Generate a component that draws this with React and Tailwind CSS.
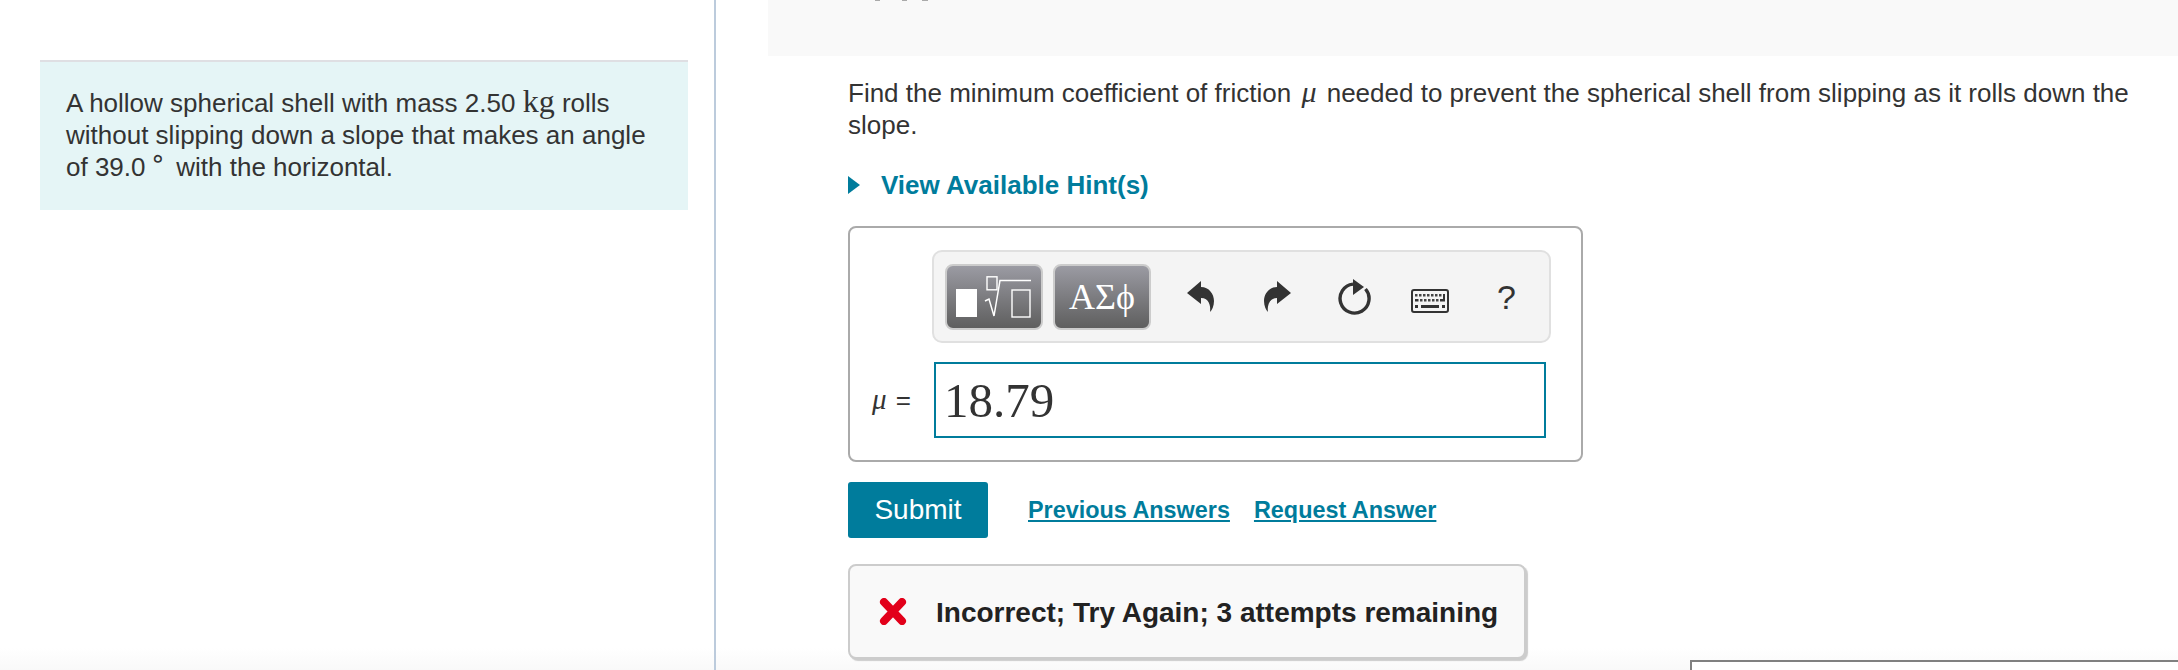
const teal = 'text-[#007c9c]';

function UndoIcon({ flip }) {
  return (
    <svg width="27" height="31" viewBox="0 0 27 31" className={flip ? '-scale-x-100' : ''}>
      <path d="M0 12 L14 0 V6 C22 6 27 13 27 20 C27 25 25 29 23 31 C24 25 22 17 14 17 V23 Z" fill="#333" />
    </svg>
  );
}

function RefreshIcon() {
  return (
    <svg width="33" height="36" viewBox="0 0 33 36">
      <path d="M15 5.1 A14.5 14.5 0 1 0 27.5 10" fill="none" stroke="#333" strokeWidth="3.4" />
      <path d="M15 0 L26 8 L15 16 Z" fill="#333" />
    </svg>
  );
}

function KeyboardIcon() {
  const top = [5, 9, 13, 17, 21, 25, 29];
  const mid = [9, 13, 17, 21, 25];
  return (
    <svg width="38" height="24" viewBox="0 0 38 24">
      <rect x="1" y="1" width="36" height="22" rx="2" fill="#f4f4f4" stroke="#333" strokeWidth="2" />
      {top.map(x => <rect key={x} x={x - 1} y="5" width="2.5" height="2.5" fill="#444" />)}
      {mid.map(x => <rect key={x} x={x} y="10" width="2.5" height="2.5" fill="#444" />)}
      <rect x="4" y="10" width="3.5" height="2.5" fill="#333" />
      <path d="M32 5 H34 V12.5 H29 V10 H32 Z" fill="#333" />
      <rect x="4" y="16" width="3" height="3" fill="#333" />
      <rect x="10" y="16" width="18" height="3" fill="#333" />
      <rect x="31" y="16" width="3" height="3" fill="#333" />
    </svg>
  );
}

function TemplateIcon() {
  return (
    <svg width="76" height="42" viewBox="0 0 76 42">
      <rect x="0" y="13" width="21" height="28" fill="#fff" />
      <rect x="31" y="0.8" width="10" height="13" fill="none" stroke="#fff" strokeWidth="1.4" />
      <path d="M29 25 L33 23 L38 40 L44 4.5 H75" fill="none" stroke="#fff" strokeWidth="1.5" />
      <rect x="56" y="14" width="18" height="27" fill="none" stroke="#fff" strokeWidth="1.4" />
    </svg>
  );
}

export default function App() {
  return (
    <div className="flex h-[670px] w-full overflow-hidden bg-[linear-gradient(to_bottom,#fff_648px,#f9f9f9_670px)] font-['Liberation_Sans',Arial,sans-serif] text-[#333]">
      {/* left column */}
      <div className="w-[716px] shrink-0 border-r-2 border-[#bccbdc] pt-[60px] pl-[40px] pr-[26px]">
        <div className="h-[150px] border-t-2 border-[#dfdfe3] bg-[#e5f5f6] pl-[26px] pt-[25px] text-[26px] leading-[32px]">
          <p>
            A hollow spherical shell with mass 2.50{' '}
            <span className="font-['Liberation_Serif',serif] text-[32px] leading-[0]">kg</span> rolls
            <br />
            without slipping down a slope that makes an angle
            <br />
            of 39.0 <span className="-ml-[3px] mr-[3px] align-[9px] font-['DejaVu_Sans',sans-serif] text-[26px] leading-[0]">∘</span> with the horizontal.
          </p>
        </div>
      </div>

      {/* right column */}
      <div className="min-w-0 flex-1 pl-[52px]">
        <div className="flex h-[56px] items-start bg-[#f9f9f9] pl-[107px]">
          <span className="h-px w-[5px] bg-[#aaa]" />
          <span className="ml-[22px] h-px w-[5px] bg-[#aaa]" />
          <span className="ml-[15px] h-px w-[6px] bg-[#aaa]" />
        </div>

        <div className="pl-[80px] pt-[21px]">
          <p className="w-[1300px] text-[26px] leading-[32px]">
            Find the minimum coefficient of friction{' '}
            <i className="mx-[3px] font-['Liberation_Serif',serif] text-[30px] leading-[0]">μ</i> needed to prevent the spherical shell from slipping as it rolls down the slope.
          </p>

          <div className="mt-[28px] flex h-[32px] items-center">
            <span className="h-0 w-0 border-y-[9px] border-l-[12px] border-y-transparent border-l-[#007c9c]" />
            <span className={`ml-[21px] text-[26px] font-bold ${teal}`}>View Available Hint(s)</span>
          </div>

          {/* answer box */}
          <div className="mt-[25px] h-[236px] w-[735px] rounded-[8px] border-2 border-[#aaa] pl-[82px] pr-[30px] pt-[22px]">
            <div className="flex h-[93px] items-center rounded-[10px] border-2 border-[#e0e0e0] bg-[#f4f4f4] pl-[11px]">
              <div className="flex h-[66px] w-[98px] items-center justify-center rounded-[8px] border-2 border-[#ccc] bg-gradient-to-b from-[#9b9ba3] to-[#5f5f5f]">
                <TemplateIcon />
              </div>
              <div className="ml-[10px] flex h-[66px] w-[98px] items-center justify-center rounded-[8px] border-2 border-[#ccc] bg-gradient-to-b from-[#9b9ba3] to-[#5f5f5f] font-['Liberation_Serif',serif] text-[36px] text-white">
                ΑΣϕ
              </div>
              <div className="ml-[36px]"><UndoIcon /></div>
              <div className="ml-[50px]"><UndoIcon flip /></div>
              <div className="ml-[47px]"><RefreshIcon /></div>
              <div className="ml-[40px] mt-[9px]"><KeyboardIcon /></div>
              <span className="ml-[48px] text-[34px] leading-none">?</span>
            </div>

            <div className="-ml-[60px] mt-[19px] flex items-center">
              <span className="w-[62px] shrink-0 text-[26px]">
                <i className="mr-[2px] font-['Liberation_Serif',serif] text-[29px]">μ</i> =
              </span>
              <div className="flex h-[76px] w-[612px] items-center border-2 border-[#007c9c] pl-[8px] font-['Liberation_Serif',serif] text-[49px] leading-none">
                18.79
              </div>
            </div>
          </div>

          {/* actions */}
          <div className="mt-[20px] flex items-center">
            <button className="flex h-[56px] w-[140px] items-center justify-center rounded-[3px] bg-[#007c9c] text-[28px] text-white">
              Submit
            </button>
            <a className={`ml-[40px] mt-[2px] text-[23.4px] font-bold underline ${teal}`}>Previous Answers</a>
            <a className={`ml-[24px] mt-[2px] text-[23.4px] font-bold underline ${teal}`}>Request Answer</a>
          </div>

          {/* feedback */}
          <div className="mt-[26px] flex h-[95px] w-[678px] items-center rounded-[8px] border-2 border-[#ccc] bg-[#f9f9f9] pl-[29px] shadow-[2px_2px_1px_#ccc]">
            <svg width="28" height="27" viewBox="0 0 28 27">
              <path d="M5 4 L14 13.5 L23 4 M23 23 L14 13.5 L5 23" fill="none" stroke="#e2001a" strokeWidth="8" strokeLinecap="round" strokeLinejoin="round" />
            </svg>
            <span className="ml-[29px] mt-[2px] text-[28px] font-bold text-[#222]">Incorrect; Try Again; 3 attempts remaining</span>
          </div>

          <div className="ml-[842px] mt-[1px] h-[30px] border-l-2 border-t-2 border-[#808080] bg-white" />
        </div>
      </div>
    </div>
  );
}
